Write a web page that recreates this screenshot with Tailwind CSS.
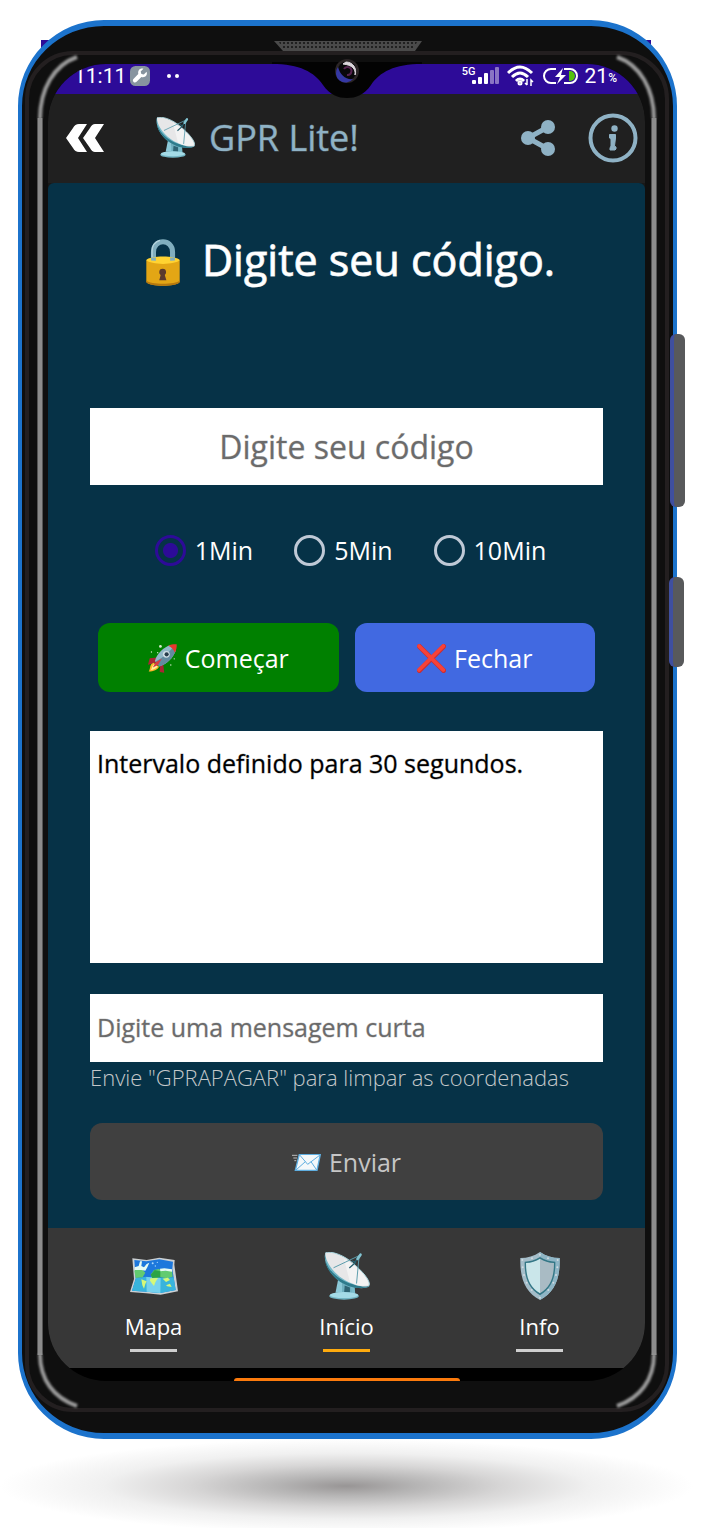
<!DOCTYPE html>
<html lang="pt-BR">
<head>
<meta charset="utf-8">
<meta name="viewport" content="width=device-width, initial-scale=1">
<title>GPR Lite!</title>
<script src="https://cdn.jsdelivr.net/npm/@tailwindcss/browser@4"></script>
</head>
<body class="bg-white font-['Open_Sans',sans-serif] text-white">
<svg class="hidden" aria-hidden="true">
  <symbol id="dish" viewBox="0 0 138 146">
    <path d="M42 84 L54 80 L58 124 H34Z" fill="#8cc9d8"/><path d="M54 88 L84 100 L86 126 H54Z" fill="#6fb0c0"/><path d="M62 102 L78 108 V126 H60Z" fill="#2e6474"/><path d="M80 100 L92 102 L94 126 H84Z" fill="#79bccb"/>
    <ellipse cx="60" cy="134" rx="45" ry="11" fill="#73b5c4"/><ellipse cx="60" cy="131" rx="43" ry="9" fill="#a4dbe7"/>
    <path d="M3 3 C-4 25 12 65 45 88 C80 112 122 114 136 105 C140 96 128 90 100 84Z" fill="#75b8c8"/>
    <path d="M3 3 C-4 25 16 62 50 82 C85 103 124 108 136 100 C137 110 105 114 75 104 C45 94 12 64 4 34Z" fill="#2e7b8c"/>
    <path d="M3 3 C18 -5 62 8 96 42 C127 70 141 92 136 102 C127 110 88 103 54 80 C20 57 2 22 3 3Z" fill="#e7e7e8"/>
    <path d="M60 22 C104 42 136 84 134 99 C122 106 97 101 78 92Z" fill="#f8f8f8" opacity=".7"/>
    <path d="M3 3 C18 -5 62 8 96 42 C127 70 141 92 136 102" fill="none" stroke="#a8d6df" stroke-width="3"/>
    <path d="M28 48 L106 11 L98 96" fill="none" stroke="#5b9cac" stroke-width="3"/>
    <path d="M108 10 L93 31 L84 27 M96 31 L76 49" fill="none" stroke="#27606e" stroke-width="4"/>
    <path d="M101 21 L110 8" stroke="#82c4d2" stroke-width="8" stroke-linecap="round"/>
  </symbol>
</svg>

<div class="pt-5 pr-[30px] pl-[18px]">
  <div class="relative">
    <div class="absolute top-5 right-[26px] left-[23px] h-10 bg-[#2d0b98]"></div>

    <!-- side keys -->
    <div class="absolute top-[314px] -right-2 z-10 h-[173px] w-[15px] rounded-md border-l-4 border-[#3f4f9f] bg-[#58595b]"></div>
    <div class="absolute top-[557px] -right-[7px] z-10 h-[90px] w-[15px] rounded-md border-l-4 border-[#3f4f9f] bg-[#58595b]"></div>

    <div class="relative rounded-[86px] border-x-4 border-y-6 border-[#1c73cc] bg-[#0f0f0f] pt-[38px] pr-7 pb-[52px] pl-[26px]">
      <div class="absolute top-[25px] right-1 bottom-[21px] left-[3px] rounded-[48px] border-4 border-[#231f20] bg-[#0f0f0f]"></div>

      <!-- edge highlights -->
      <svg class="absolute top-[25px] left-[14px] h-[calc(100%-46px)] w-11 overflow-visible" fill="none" stroke="#999" stroke-width="4" aria-hidden="true">
        <defs><filter id="soft" x="-50%" y="-50%" width="200%" height="200%"><feGaussianBlur stdDeviation="1"/></filter></defs>
        <path d="M41 6 C18 14 4 38 4 68" filter="url(#soft)"/>
        <rect x="1" y="67" width="6" style="height:calc(100% - 124px)" fill="#555" stroke="none"/><rect x="2" y="67" width="4" style="height:calc(100% - 124px)" fill="#8c8c8c" stroke="none"/>
        <svg y="100%" overflow="visible"><path d="M4 -58 C4 -32 18 -14 41 -6" filter="url(#soft)"/></svg>
      </svg>
      <svg class="absolute top-[25px] right-[14px] h-[calc(100%-46px)] w-11 overflow-visible" fill="none" stroke="#999" stroke-width="4" aria-hidden="true">
        <path d="M2 6 C25 14 39 38 39 68" filter="url(#soft)"/>
        <rect x="36" y="67" width="6" style="height:calc(100% - 124px)" fill="#555" stroke="none"/><rect x="37" y="67" width="4" style="height:calc(100% - 124px)" fill="#8c8c8c" stroke="none"/>
        <svg y="100%" overflow="visible"><path d="M39 -58 C39 -32 25 -14 2 -6" filter="url(#soft)"/></svg>
      </svg>

      <!-- speaker -->
      <svg class="absolute top-[15px] left-1/2 w-[148px] -translate-x-1/2" height="10" viewBox="0 0 148 10" aria-hidden="true">
        <defs><pattern id="dots" width="4" height="4" patternUnits="userSpaceOnUse"><rect width="4" height="4" fill="#4a4a4a"/><circle cx="2" cy="2" r="1.1" fill="#151515"/></pattern></defs>
        <path d="M0 0H148L141 10H9Z" fill="#4a4a4a"/><path d="M5 1H143L139 9H9Z" fill="url(#dots)"/>
      </svg>

      <!-- camera notch -->
      <div class="absolute inset-x-0 top-9 z-10 flex justify-center pr-0.5">
      <svg width="150" height="38" viewBox="0 0 150 38" class="overflow-visible" aria-hidden="true">
        <path d="M0 0H150V2C122 2 108 10 99 23C92 33 84 36 75 36C66 36 58 33 51 23C42 10 28 2 0 2Z" fill="#030303"/>
        <circle cx="75" cy="9" r="12" fill="#2b2526"/><circle cx="75" cy="9" r="9.5" fill="#08080a"/>
        <path d="M66 5A9.500 9.500 0 0 0 81 17C74 18 68 13 66 5Z" fill="#3538a4"/><path d="M74 0A9.500 9.500 0 0 1 83 13C84 7 80 3 71 2Z" fill="#dcd6dc" stroke="#dcd6dc"/><path d="M72 7A4 4 0 1 1 75 13" fill="none" stroke="#57234f" stroke-width="2"/>
      </svg>
      </div>

      <main class="relative overflow-hidden rounded-[58px] bg-black">
        <!-- status bar -->
        <div class="flex h-[30px] items-center bg-[#2d0b98] pr-7 pb-1.5 pl-[26px] font-['Roboto',sans-serif] text-xl leading-6">
          <span class="w-[50px] text-[21px]">11:11</span>
          <svg class="ml-1.5" width="20" height="20" viewBox="0 0 58 58" aria-hidden="true"><rect width="58" height="58" rx="16" fill="#87949f"/><path d="M48 17 L40 25 L33 23 L31 16 L39 8 C30 5 22 12 24 23 L10 38 C5 44 13 52 19 46 L33 32 C44 35 52 27 48 17Z" fill="#fff"/></svg>
          <svg class="ml-4" width="14" height="6" viewBox="0 0 14 6" fill="#fff" aria-hidden="true"><circle cx="3" cy="3" r="2"/><circle cx="11" cy="3" r="2"/></svg>
          <div class="ml-auto flex h-6 items-center">
            <span class="h-6 text-[11px] leading-4 font-medium">5G</span>
            <svg class="-ml-1" width="27" height="18" viewBox="0 0 27 18" fill="#fff" aria-hidden="true"><rect y="13" width="4" height="4" rx="1"/><rect x="6" y="10" width="4" height="7" rx="1"/><rect x="12" y="6" width="4" height="11" rx="1"/><g fill="#8a75c4"><rect x="18" y="3" width="4" height="14" rx="1"/><rect x="23" width="4" height="17" rx="1"/></g></svg>
            <svg class="ml-2" width="27" height="22" viewBox="0 0 27 22" fill="none" stroke="#fff" stroke-width="3" aria-hidden="true"><path d="M1 8Q13 -4 25 8M5 12Q13 4 21 12M9 16Q13 12 17 16"/><circle cx="13" cy="18" r="1"/><path d="M20 14V20M18 18L20 20M24 21V15L26 17" stroke-width="1.5"/></svg>
            <svg class="ml-2" width="37" height="18" viewBox="0 0 37 18" aria-hidden="true"><path d="M14 2H9A7 7 0 0 0 9 16H14M22 16H28A7 7 0 0 0 28 2H22" fill="none" stroke="#fff" stroke-width="2"/><path d="M27 4H28A5 5 0 0 1 28 14H27Z" fill="#54c20d"/><path d="M21 1L13 10H18L15 17L24 8H19Z" fill="#fff"/></svg>
            <span class="ml-1.5 text-[21px]">21</span><span class="pt-1 text-xs font-medium">%</span>
          </div>
        </div>

        <!-- app bar -->
        <header class="flex h-[89px] items-center bg-[#202020] pr-[7px] pb-0.5 pl-[18px]">
          <button type="button" aria-label="Voltar"><svg width="38" height="28" viewBox="0 0 38 28" fill="#fff"><path d="M13 0H21L12 14L21 28H13Q9 28 7 24L0 14L7 4Q9 0 13 0Z"/><path d="M29 0H38L29 14L38 28H29Q26 28 24 24L17 14L24 4Q26 0 29 0Z"/></svg></button>
          <svg class="ml-[52px] h-[41px] w-[39px]" aria-hidden="true"><use href="#dish"/></svg>
          <h1 class="ml-3.5 text-[36px] leading-[48px] text-[#8fb2c5] [-webkit-text-stroke:1px_rgb(143_178_197/0.4)]">GPR Lite!</h1>
          <button type="button" aria-label="Compartilhar" class="ml-auto"><svg width="34" height="36" viewBox="0 0 34 36" fill="#8fb2c5"><path d="M27 7L7 18L27 29" fill="none" stroke="#8fb2c5" stroke-width="5"/><circle cx="27" cy="7" r="7"/><circle cx="7" cy="18" r="7"/><circle cx="27" cy="29" r="7"/></svg></button>
          <button type="button" aria-label="Informações" class="ml-[33px]"><svg width="50" height="50" viewBox="0 0 50 50" fill="#8fb2c5"><circle cx="25" cy="25" r="22.500" fill="none" stroke="#8fb2c5" stroke-width="4"/><circle cx="26.500" cy="15.500" r="3.200"/><path d="M21.500 21.500H27.500V25L26.500 33L28 34V36L27 37H22V35L23 33V26L21.500 25Z" stroke="#8fb2c5" stroke-linejoin="round"/></svg></button>
        </header>

        <div class="bg-[#181818]">
        <section class="flex flex-col rounded-t-md bg-[#063247] px-[42px] pt-[41px] pb-7">
          <h2 class="flex h-[72px] items-center justify-center pl-2 text-[43px] leading-[60px] [-webkit-text-stroke:1px_rgb(255_255_255/0.8)]">
            <svg class="mt-1 mr-[22px]" width="34" height="47" viewBox="0 0 98 138" aria-hidden="true"><path d="M21 64V38C21 -2 77 -2 77 38V64" fill="none" stroke="#81aebe" stroke-width="15"/><path d="M17 62V36C17 20 26 8 40 4" fill="none" stroke="#b3d3dc" stroke-width="4"/><path d="M0 62V126C10 141 88 141 98 126V62Z" fill="#e3a615"/><path d="M0 122V127C10 141 88 141 98 127V122C86 135 12 135 0 122Z" fill="#b6780e"/><path d="M0 62C8 48 90 48 98 62C86 77 12 77 0 62Z" fill="#ffd332"/><path d="M14 63V54H28V64M70 64V54H84V63" fill="#81aebe"/><circle cx="48" cy="97" r="10" fill="#5a392d"/><path d="M44 98H52L59 121H38Z" fill="#5a392d"/></svg>
            Digite seu código.
          </h2>

          <input type="text" aria-label="Código" placeholder="Digite seu código" class="mt-28 h-[77px] w-full bg-white text-center text-[32px] text-black outline-none [-webkit-text-stroke:1px_rgb(107_107_107/0.3)] placeholder:text-[#6b6b6b]">

          <fieldset class="mt-[49px] flex h-8 items-center justify-center gap-[41px] pl-2 text-[25px] leading-8">
            <label class="flex items-center gap-[9px]"><input type="radio" name="intervalo" checked class="h-[31px] w-[31px] appearance-none rounded-full border-3 border-[#2d0b98] bg-[radial-gradient(circle,#2d0b98_7px,transparent_8px)]">1Min</label>
            <label class="flex items-center gap-[9px]"><input type="radio" name="intervalo" class="h-[31px] w-[31px] appearance-none rounded-full border-3 border-[#bfc9d6]">5Min</label>
            <label class="flex items-center gap-[9px]"><input type="radio" name="intervalo" class="h-[31px] w-[31px] appearance-none rounded-full border-3 border-[#bfc9d6]">10Min</label>
          </fieldset>

          <div class="mt-[57px] flex gap-4 px-2 text-[25px]">
            <button type="button" class="flex h-[69px] flex-1 items-center justify-center gap-2 rounded-xl bg-[#008000] pt-0.5">
              <svg width="29" height="29" viewBox="0 0 84 84" aria-hidden="true"><path d="M27 39L5 41L0 60L22 54ZM44 58L47 83L34 81L35 63Z" fill="#a92534"/><path d="M16 54C4 58 8 70 2 80C16 80 28 74 32 66Z" fill="#ffb22b"/><path d="M18 58C11 64 12 70 8 76C18 74 24 70 28 66Z" fill="#fff39b"/><path d="M20 49C26 27 45 10 65 3L81 18C72 41 56 57 33 65Z" fill="#91b8c8"/><path d="M22 51C42 39 61 24 72 10L81 18C72 41 56 57 33 65Z" fill="#638ba0"/><path d="M59 5C67 1 77 0 83 1C84 8 82 18 78 25C74 16 68 9 59 5Z" fill="#e9372e"/><circle cx="53" cy="30" r="10" fill="#d0dfe5"/><circle cx="54" cy="30" r="6" fill="#273c4c"/><path d="M40 43L22 53L14 68L29 61Z" fill="#d83b43"/><g fill="#d4eacb"><circle cx="36" cy="7" r="4"/><circle cx="10" cy="23" r="2"/><circle cx="76" cy="43" r="2"/><circle cx="66" cy="61" r="2"/><circle cx="28" cy="25" r="2"/></g></svg>
              Começar
            </button>
            <button type="button" class="flex h-[69px] flex-1 items-center justify-center gap-2 rounded-xl bg-[#4169e1] pt-0.5">
              <svg width="29" height="29" viewBox="0 0 84 84" aria-hidden="true"><path d="M7 7L77 77M77 7L7 77" stroke="#c92d32" stroke-width="14" stroke-linecap="round"/><path d="M6 6L76 75M76 6L6 75" stroke="#f64239" stroke-width="11" stroke-linecap="round"/></svg>
              Fechar
            </button>
          </div>

          <textarea readonly aria-label="Registro" class="mt-[39px] block h-[232px] w-full resize-none bg-white px-[7px] py-[15px] text-[25px] leading-[34px] text-black outline-none [-webkit-text-stroke:1px_rgb(0_0_0/0.3)]">Intervalo definido para 30 segundos.</textarea>

          <input type="text" id="mensagem" aria-label="Mensagem" aria-describedby="dica" placeholder="Digite uma mensagem curta" class="mt-[31px] h-[68px] w-full bg-white px-[7px] pb-0.5 text-[25px] text-black outline-none [-webkit-text-stroke:1px_rgb(107_107_107/0.3)] placeholder:text-[#6b6b6b]">
          <p id="dica" class="h-[30px] text-[22px] leading-[30px] font-light whitespace-nowrap text-[#c4c8ca]">Envie "GPRAPAGAR" para limpar as coordenadas</p>

          <button type="button" class="mt-[31px] flex h-[77px] w-full items-center justify-center gap-2 rounded-xl bg-[#404040] pt-0.5 text-[25px] text-[#c6c6c6]">
            <svg width="29" height="17" viewBox="0 0 87 51" aria-hidden="true"><path d="M22 1H85L75 49H10Z" fill="#f4f8fa" stroke="#5faee0" stroke-width="4"/><path d="M23 3L47 31L84 3M12 48L40 23M74 48L57 23" fill="none" stroke="#5faee0" stroke-width="3"/><path d="M0 4H16M4 12H15M7 20H13" stroke="#bbb" stroke-width="3"/></svg>
            Enviar
          </button>
        </section>
        </div>

        <nav class="flex h-[140px] justify-between bg-[#373737] px-[9px] pt-6 text-[22px]">
          <a href="#mapa" class="flex flex-1 flex-col items-center">
            <svg width="48" height="48" viewBox="0 -16 144 144" aria-hidden="true"><path d="M7 3L50 8L88 1L134 8L133 22L144 102L92 112L48 108L0 104L12 65Z" fill="#cbd0d3"/><path d="M13 8L49 12L88 6L129 13L127 35L137 98L91 107L50 103L6 100L17 64Z" fill="#1d78dc"/><path d="M18 62L48 58L90 62L131 60L137 98L91 107L50 103L6 100Z" fill="#38b4dc"/><path d="M49 59L92 62L91 107L50 103Z" fill="#76d2ef"/><path d="M13 40L22 34L36 36L46 46L38 60L17 62ZM62 52L72 38L86 35L101 40L126 38L128 58L112 63L91 60L67 62Z" fill="#62cb70"/><path d="M14 30L26 26L30 12L36 12L34 26L42 30L50 20L58 16L52 30L46 40L34 38L14 38ZM90 34L103 33L126 36V43L107 40L91 42Z" fill="#e6fbf3"/><path d="M62 52L74 38L91 42V60L67 62Z" fill="#2ba445"/><path d="M34 66L50 72L46 80L42 94L37 84ZM61 63L84 62L76 75L72 86L67 80L60 70ZM98 64L114 61L120 68L108 74ZM108 84L120 79L125 89L112 87Z" fill="#d5f878"/><g fill="#a9d8ff"><circle cx="68" cy="18" r="3"/><circle cx="82" cy="15" r="2"/><circle cx="76" cy="26" r="2"/></g></svg>
            <span class="mt-[11px] leading-[30px]">Mapa</span><span class="mt-2 h-[3px] w-[47px] bg-[#cfcfcf]"></span>
          </a>
          <a href="#inicio" aria-current="page" class="flex flex-1 flex-col items-center">
            <svg class="h-12 w-12" aria-hidden="true"><use href="#dish"/></svg>
            <span class="mt-[11px] leading-[30px]">Início</span><span class="mt-2 h-[3px] w-[47px] bg-[#ffab0e]"></span>
          </a>
          <a href="#info" class="flex flex-1 flex-col items-center">
            <svg width="48" height="48" viewBox="-12 0 144 144" aria-hidden="true"><path d="M60 0C78 12 97 18 119 18C121 80 104 121 60 144C16 121 -1 80 1 18C23 18 42 12 60 0Z" fill="#a4bdc9"/><path d="M60 0C78 12 97 18 119 18C121 80 104 121 60 144Z" fill="#8eb5c5"/><path d="M60 15C75 24 90 29 106 29C107 77 95 109 60 130C25 109 13 77 14 29C30 29 45 24 60 15Z" fill="#337786"/><path d="M60 20V124C29 106 18 76 18 33C34 32 48 28 60 20Z" fill="#cae6ea"/><path d="M60 20V124C91 106 102 76 102 33C86 32 72 28 60 20Z" fill="#a9bbc4"/><g fill="#d0dae0"><circle cx="7" cy="24" r="3"/><circle cx="8" cy="46" r="3"/><circle cx="12" cy="69" r="3"/><circle cx="20" cy="92" r="3"/><circle cx="35" cy="114" r="3"/><circle cx="60" cy="8" r="3"/><circle cx="36" cy="19" r="3"/><circle cx="84" cy="19" r="3"/><circle cx="113" cy="24" r="3"/><circle cx="112" cy="46" r="3"/><circle cx="108" cy="69" r="3"/><circle cx="100" cy="92" r="3"/><circle cx="85" cy="114" r="3"/><circle cx="60" cy="137" r="3"/></g></svg>
            <span class="mt-[11px] leading-[30px]">Info</span><span class="mt-2 h-[3px] w-[47px] bg-[#cfcfcf]"></span>
          </a>
        </nav>
        <div class="flex h-[13px] items-end justify-center"><div class="h-[3px] w-[226px] rounded-t-sm bg-[#fb7a0c]"></div></div>
      </main>
    </div>
  </div>
</div>
<div class="h-[90px] overflow-hidden pr-[14px]"><div class="h-[94px] bg-[radial-gradient(closest-side,#989595,#b5b4b4_20%,#d7d6d6_45%,#f0f0f0_70%,#fff)]"></div></div>
</body>
</html>
